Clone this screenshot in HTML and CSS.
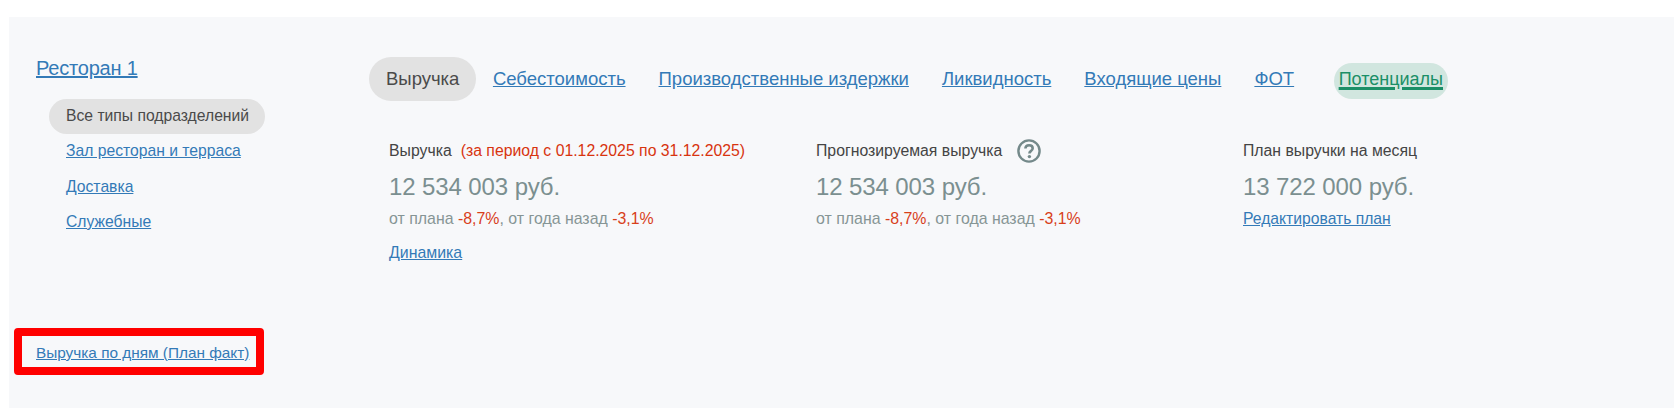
FILE: index.html
```html
<!DOCTYPE html>
<html lang="ru">
<head>
    <meta charset="UTF-8">
    <title>Выручка</title>
    <link rel="stylesheet" href="styles.css">
</head>
<body>
    <div class="panel">
        <div class="side">
            <a class="restaurant" href="#">Ресторан 1</a>
            <ul class="units">
                <li class="active">Все типы подразделений</li>
                <li><a href="#">Зал ресторан и терраса</a></li>
                <li><a href="#">Доставка</a></li>
                <li><a href="#">Служебные</a></li>
            </ul>
            <div class="daily">
                <a href="#">Выручка по дням (План факт)</a>
            </div>
        </div>

        <div class="main">
            <nav class="tabs">
                <span class="tab active">Выручка</span>
                <a class="tab" href="#">Себестоимость</a>
                <a class="tab" href="#">Производственные издержки</a>
                <a class="tab" href="#">Ликвидность</a>
                <a class="tab" href="#">Входящие цены</a>
                <a class="tab" href="#">ФОТ</a>
                <a class="tab potential" href="#">Потенциалы</a>
            </nav>

            <div class="metrics">
                <div class="metric">
                    <div class="metric-title">Выручка <span class="period">(за период с 01.12.2025 по 31.12.2025)</span></div>
                    <div class="metric-value">12 534 003 руб.</div>
                    <div class="metric-sub">от плана <span class="neg">-8,7%</span>, от года назад <span class="neg">-3,1%</span></div>
                    <a class="metric-link" href="#">Динамика</a>
                </div>
                <div class="metric">
                    <div class="metric-title">Прогнозируемая выручка
                        <svg class="help" viewBox="0 0 24 24" width="24" height="24">
                            <circle cx="12" cy="12" r="10.6" fill="none" stroke="#74898a" stroke-width="2.4"/>
                            <path d="M8.4 9.6c0-2.1 1.6-3.4 3.7-3.4s3.6 1.2 3.6 3c0 1.4-.8 2.1-1.9 2.9-1 .7-1.4 1.1-1.4 2.4" fill="none" stroke="#74898a" stroke-width="2.6"/>
                            <circle cx="12.4" cy="17.6" r="1.7" fill="#74898a"/>
                        </svg>
                    </div>
                    <div class="metric-value">12 534 003 руб.</div>
                    <div class="metric-sub">от плана <span class="neg">-8,7%</span>, от года назад <span class="neg">-3,1%</span></div>
                </div>
                <div class="metric">
                    <div class="metric-title">План выручки на месяц</div>
                    <div class="metric-value">13 722 000 руб.</div>
                    <a class="metric-link edit" href="#">Редактировать план</a>
                </div>
            </div>
        </div>
    </div>
</body>
</html>
```

FILE: styles.css
```css
body {
    margin: 0;
    padding: 17px 0 2px 9px;
    background-color: #fff;
    font-family: "Liberation Sans", Arial, sans-serif;
    color: #4a4a4a;
}
a {
    color: #337ab7;
    text-decoration: underline;
}
.panel {
    display: flex;
    height: 391px;
    background-color: #f7f8fa;
}
.side {
    width: 360px;
    flex: none;
    padding: 39px 0 0 27px;
    box-sizing: border-box;
}
.restaurant {
    display: block;
    font-size: 20px;
    line-height: 24px;
    letter-spacing: -0.2px;
}
.units {
    list-style: none;
    margin: 19px 0 0 13px;
    padding: 0;
    font-size: 15.7px;
    line-height: 35px;
}
.units li {
    padding-left: 17px;
    height: 35.5px;
}
.units li.active {
    width: fit-content;
    height: 35px;
    padding-right: 16px;
    margin-bottom: -1px;
    line-height: 33px;
    background-color: #e2e2e2;
    border-radius: 18px;
}
.daily {
    width: 220px;
    height: 31px;
    margin: 88.5px 0 0 -22px;
    padding-left: 14px;
    border: 8px solid #f00;
    border-radius: 4px;
    font-size: 15.35px;
    line-height: 34px;
}
.main {
    flex: 1;
}
.tabs {
    display: flex;
    align-items: center;
    margin-top: 40px;
    font-size: 18.5px;
    height: 44px;
}
.tab {
    padding: 0 16.5px;
}
.tab.active {
    height: 44px;
    padding: 0 17px;
    line-height: 44px;
    background-color: #e2e2e2;
    border-radius: 22px;
}
.tab.potential {
    margin: 4px 0 0 23px;
    padding: 0 5px;
    height: 36px;
    font-size: 18px;
    line-height: 32px;
    color: #1b8f67;
    background-color: #d1e6df;
    border-radius: 18px;
    text-decoration-thickness: 3px;
}
.metrics {
    display: flex;
    margin-top: 38px;
    padding-left: 20px;
}
.metric {
    width: 427px;
}
.metric-title {
    display: flex;
    align-items: center;
    gap: 9px;
    height: 24px;
    font-size: 15.8px;
    color: #444;
}
.period {
    color: #d8340f;
}
.metric-value {
    margin-top: 8px;
    font-size: 24px;
    line-height: 32px;
    letter-spacing: -0.1px;
    color: #7b8f90;
}
.metric-sub {
    margin-top: 5px;
    font-size: 15.9px;
    line-height: 22px;
    color: #869595;
}
.neg {
    color: #d8401a;
}
.metric-link {
    display: inline-block;
    margin-top: 12px;
    font-size: 15.9px;
    line-height: 22px;
}
.metric-link.edit {
    margin-top: 5px;
    font-size: 15.7px;
}
.help {
    margin-left: 6px;
}
```
